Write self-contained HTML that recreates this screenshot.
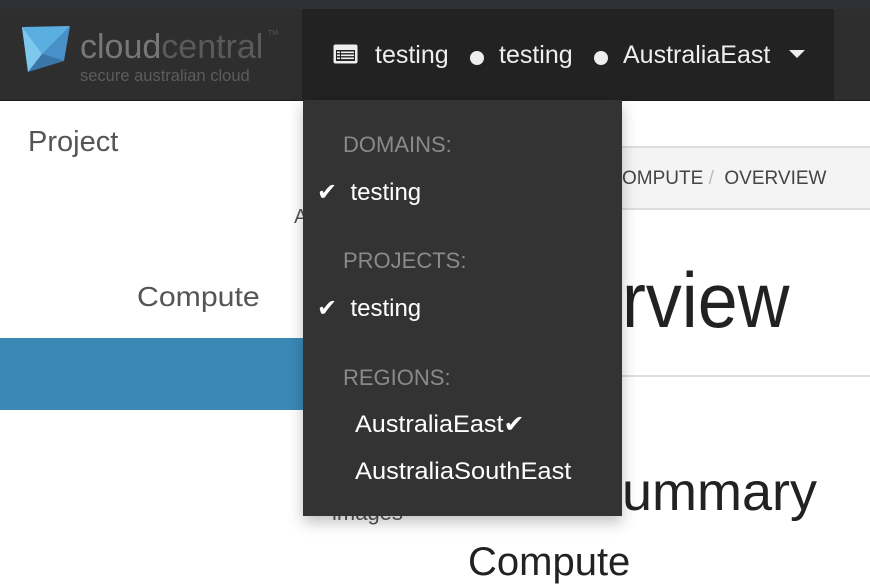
<!DOCTYPE html>
<html><head><meta charset="utf-8"><style>
*{margin:0;padding:0;box-sizing:border-box}
body{width:870px;height:568px;overflow:hidden;background:#fff;font-family:"Liberation Sans",sans-serif;position:relative;color:#333}
.abs{position:absolute;white-space:nowrap}
</style></head><body>
<div class="abs" style="left:0;top:0;width:870px;height:9px;background:#2e3237"></div>
<div class="abs" style="left:0;top:9px;width:870px;height:92px;background:#2e2e2e;border-bottom:1px solid #1a1a1a"></div>
<div class="abs" style="left:302px;top:9px;width:532px;height:91px;background:#222"></div>
<svg class="abs" style="left:20px;top:24px" width="52" height="50" viewBox="0 0 52 50">
<polygon points="2,3 50,2 8,48" fill="#5aaee0"/>
<polygon points="2,3 22,30 8,48" fill="#7ec8ee"/>
<polygon points="50,2 22,30 44,37" fill="#4a90c8"/>
<polygon points="22,30 44,37 8,48" fill="#3a77a8"/>
</svg>
<div class="abs" style="left:80px;top:27px;font-size:34px;color:#777;line-height:40px">cloud<span style="color:#5a5a5a">central</span></div>
<div class="abs" style="left:268px;top:30px;font-size:7px;color:#555">TM</div>
<div class="abs" style="left:80px;top:66px;font-size:16.5px;color:#5c5c5c;line-height:20px">secure australian cloud</div>
<svg class="abs" style="left:333px;top:44px" width="25" height="20" viewBox="0 0 25 20"><rect x="0.5" y="0.5" width="24" height="19" rx="2" fill="#eee"/><rect x="3" y="6" width="19" height="11" fill="#222"/><rect x="4" y="7.5" width="3" height="1.6" fill="#eee"/><rect x="8" y="7.5" width="13" height="1.6" fill="#eee"/><rect x="4" y="10.5" width="3" height="1.6" fill="#eee"/><rect x="8" y="10.5" width="13" height="1.6" fill="#eee"/><rect x="4" y="13.5" width="3" height="1.6" fill="#eee"/><rect x="8" y="13.5" width="13" height="1.6" fill="#eee"/></svg>
<div class="abs" style="left:375px;top:40px;font-size:25px;color:#eee;line-height:30px">testing</div>
<div class="abs" style="left:470px;top:51px;width:14px;height:14px;border-radius:50%;background:#eee"></div>
<div class="abs" style="left:499px;top:40px;font-size:25px;color:#eee;line-height:30px">testing</div>
<div class="abs" style="left:594px;top:51px;width:14px;height:14px;border-radius:50%;background:#eee"></div>
<div class="abs" style="left:623px;top:40px;font-size:25px;color:#eee;line-height:30px">AustraliaEast</div>
<svg class="abs" style="left:789px;top:50px" width="16" height="9"><polygon points="0,0 16,0 8,8" fill="#eee"/></svg>
<div class="abs" style="left:28px;top:126px;font-size:29px;color:#555">Project</div>
<div class="abs" style="left:137px;top:281px;font-size:28px;color:#555;transform:scaleX(1.08);transform-origin:left">Compute</div>
<div class="abs" style="left:294px;top:206px;font-size:20px;color:#555">A</div>
<div class="abs" style="left:0;top:338px;width:303px;height:72px;background:#3a89b5"></div>
<div class="abs" style="left:303px;top:146px;width:567px;height:64px;background:#f4f4f4;border-top:2px solid #ddd;border-bottom:2px solid #ddd"></div>
<div class="abs" style="left:622px;top:168px;font-size:19px;color:#444">OMPUTE <span style="color:#bbb">/</span>&nbsp; OVERVIEW</div>
<div class="abs" style="left:622px;top:250px;font-size:78px;color:#222;line-height:100px;transform:scaleX(0.92);transform-origin:left">rview</div>
<div class="abs" style="left:303px;top:375px;width:567px;height:2px;background:#ddd"></div>
<div class="abs" style="left:622px;top:460px;font-size:54px;color:#222;line-height:64px">ummary</div>
<div class="abs" style="left:468px;top:539px;font-size:40px;color:#222;line-height:46px">Compute</div>
<div class="abs" style="left:332px;top:500px;font-size:22px;color:#555">images</div>
<div class="abs" style="left:303px;top:100px;width:319px;height:416px;background:#333;box-shadow:0 6px 14px rgba(0,0,0,.25)"></div>
<div class="abs" style="left:343px;top:132px;font-size:22px;color:#8a8a8a">DOMAINS:</div>
<div class="abs" style="left:317px;top:178px;font-size:24px;color:#fff">✔ &nbsp;testing</div>
<div class="abs" style="left:343px;top:248px;font-size:22px;color:#8a8a8a">PROJECTS:</div>
<div class="abs" style="left:317px;top:294px;font-size:24px;color:#fff">✔ &nbsp;testing</div>
<div class="abs" style="left:343px;top:365px;font-size:22px;color:#8a8a8a">REGIONS:</div>
<div class="abs" style="left:355px;top:410px;font-size:24px;color:#fff;transform:scaleX(1.05);transform-origin:left">AustraliaEast✔</div>
<div class="abs" style="left:355px;top:458px;font-size:24px;color:#fff;transform:scaleX(1.06);transform-origin:left">AustraliaSouthEast</div>
</body></html>
